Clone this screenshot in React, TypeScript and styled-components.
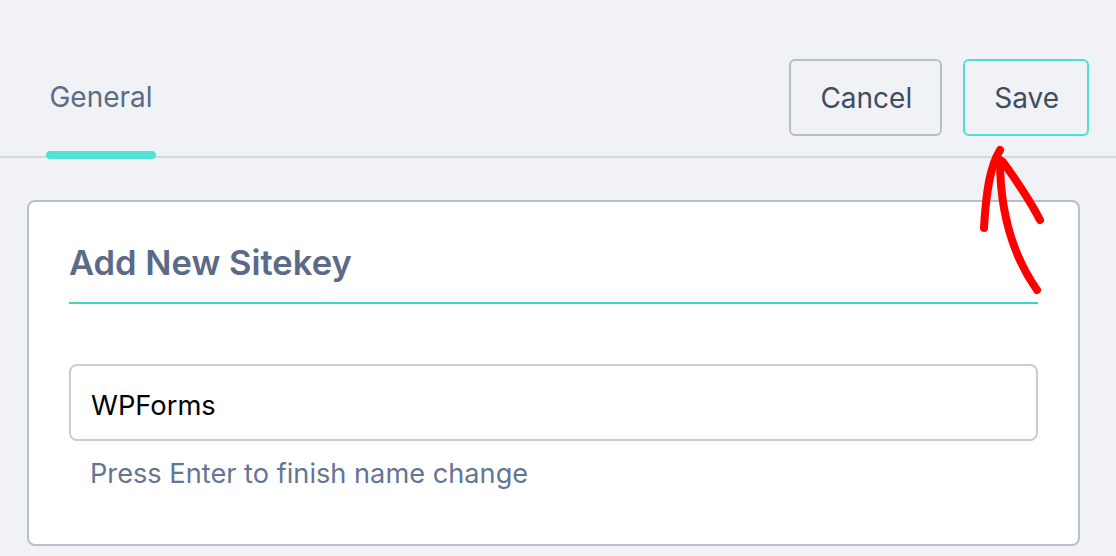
import styled, { createGlobalStyle } from 'styled-components';

const GlobalStyle = createGlobalStyle`
    * {
        box-sizing: border-box;
    }

    body {
        margin: 0;
        background: #f0f2f6;
        font-family: Inter, "Noto Sans", sans-serif;
    }
`;

function App() {
    return (
        <Page>
            <GlobalStyle />
            <Header>
                <Tabs>
                    <Tab active>General</Tab>
                </Tabs>
                <Actions>
                    <ActionButton type="button">Cancel</ActionButton>
                    <ActionButton type="button" primary>Save</ActionButton>
                </Actions>
            </Header>
            <Card>
                <CardTitle>Add New Sitekey</CardTitle>
                <NameInput defaultValue="WPForms" />
                <Hint>Press Enter to finish name change</Hint>
            </Card>
            <Arrow viewBox="0 0 100 170" aria-hidden="true">
                <path d="M40 10 C 30 26, 26 52, 24 88" />
                <path d="M43 22 C 56 40, 70 60, 80 80" />
                <path d="M40 20 C 40 80, 56 120, 77 150" />
            </Arrow>
        </Page>
    )
}

const Page = styled.div`
    position: relative;
    min-height: 556px;
    overflow: hidden;
`;

const Header = styled.header`
    height: 158px;
    display: flex;
    justify-content: space-between;
    align-items: stretch;
    padding: 0 27px 0 46px;
    border-bottom: 2px solid #d2d8e0;
`;

const Tabs = styled.nav`
    display: flex;
`;

const Tab = styled.div<{ active?: boolean }>`
    position: relative;
    width: 110px;
    padding-top: 80px;
    text-align: center;
    font-size: 28px;
    color: #5b6b88;

    &::after {
        content: '';
        position: absolute;
        left: 0;
        right: 0;
        bottom: -3px;
        height: 8px;
        border-radius: 4px;
        background: ${p => (p.active ? '#50e3d5' : 'transparent')};
    }
`;

const Actions = styled.div`
    display: flex;
    gap: 21px;
    padding-top: 59px;
    align-items: flex-start;
`;

const ActionButton = styled.button<{ primary?: boolean }>`
    height: 77px;
    padding: 0 28px 0 29px;
    border: 2px solid ${p => (p.primary ? '#4fe0d2' : '#b3bfcd')};
    border-radius: 6px;
    background: transparent;
    font-family: Inter, "Noto Sans", sans-serif;
    font-size: 28px;
    color: #3f4c62;
    cursor: pointer;
`;

const Card = styled.section`
    margin: 42px 36px 0 27px;
    height: 346px;
    padding: 40px 40px 0;
    background: #ffffff;
    border: 2px solid #b5c0ce;
    border-radius: 8px;
`;

const CardTitle = styled.h2`
    margin: 0;
    padding-bottom: 19px;
    border-bottom: 2px solid #40d4c8;
    font-size: 34.5px;
    font-weight: 600;
    color: #5a6a87;
`;

const NameInput = styled.input`
    display: block;
    width: 100%;
    height: 77px;
    margin-top: 60px;
    padding: 6px 20px 0;
    border: 2px solid #cccccc;
    border-radius: 8px;
    font-family: Inter, "Noto Sans", sans-serif;
    font-size: 27.3px;
    color: #000000;
    outline: none;
`;

const Hint = styled.p`
    margin: 16px 0 0 21px;
    font-size: 27.2px;
    color: #647593;
`;

const Arrow = styled.svg`
    position: absolute;
    left: 960px;
    top: 140px;
    width: 100px;
    height: 170px;
    fill: none;

    path {
        stroke: #ff0000;
        stroke-width: 8;
        stroke-linecap: round;
    }
`;

export default App
